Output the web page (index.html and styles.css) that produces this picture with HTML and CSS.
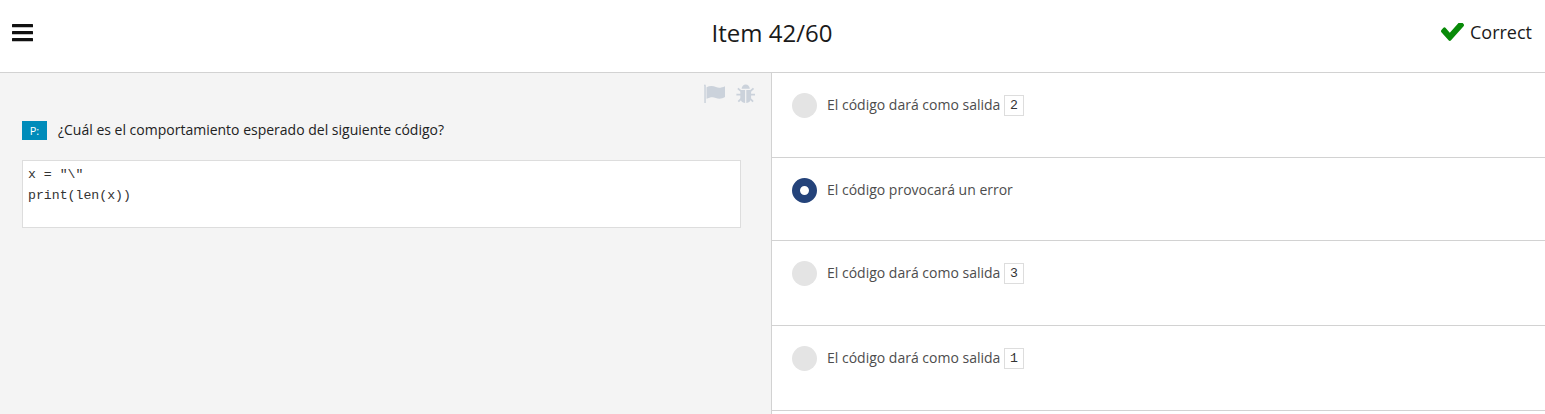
FILE: index.html
```
<!DOCTYPE html>
<html lang="es">
<head>
<meta charset="utf-8">
<title>Item 42/60</title>
<link rel="stylesheet" href="styles.css">
</head>
<body>
<header class="header">
  <svg class="menu-icon" viewBox="0 0 21 18"><rect y="0" width="21" height="3.2" rx=".5"/><rect y="7" width="21" height="3.2" rx=".5"/><rect y="14" width="21" height="3.2" rx=".5"/></svg>
  <h1 class="title">Item 42/60</h1>
  <div class="result">
    <svg class="check-icon" viewBox="121 434 1550 1088" preserveAspectRatio="none"><path d="M1671 566q0 40-28 68l-724 724-136 136q-28 28-68 28t-68-28l-136-136-362-362q-28-28-28-68t28-68l136-136q28-28 68-28t68 28l294 295 656-657q28-28 68-28t68 28l136 136q28 28 28 68z"/></svg>
    <span>Correct</span>
  </div>
</header>
<main class="main">
  <section class="question">
    <div class="tools">
      <svg class="tool-icon flag" viewBox="0 0 22 20"><path d="M0 1.7Q0 .6.9.6t.9 1.1V19H.3V2.400Z"/><path d="M2.500 3.200C5.500 1.700 8.500 1.300 12 3c2.800 1.300 5.600.700 9-.8V13c-3.200 1.900-6.200 2.100-9.200.9-3.200-1.400-6-.7-9.300.8Z"/></svg>
      <svg class="tool-icon bug" viewBox="0 0 20 20"><path d="M5.600 4.800C5.800 2.200 7.500.5 9.700.5s3.900 1.700 4.100 4.300Z"/><path d="M4.300 6h4.800v12.900C6.200 18.800 4.300 16.600 4.300 13.400ZM10.300 6h4.800v7.400c0 3.200-1.900 5.400-4.800 5.500Z"/><path class="legs" d="M1.900 4.300 5 7.200M17.500 4.300 14.400 7.200M.4 10.700H5M19 10.700H14.400M2.300 17.700 5.300 14.700M17.100 17.700 14.100 14.700"/></svg>
    </div>
    <div class="prompt"><span class="badge">P:</span><span>¿Cuál es el comportamiento esperado del siguiente código?</span></div>
    <pre class="code">x = "\"
print(len(x))
</pre>
  </section>
  <section class="answers">
    <div class="answer"><span class="radio"></span><span>El código dará como salida <code class="value">2</code></span></div>
    <div class="answer short"><span class="radio selected"></span><span>El código provocará un error</span></div>
    <div class="answer"><span class="radio"></span><span>El código dará como salida <code class="value">3</code></span></div>
    <div class="answer"><span class="radio"></span><span>El código dará como salida <code class="value">1</code></span></div>
  </section>
</main>
</body>
</html>
```
FILE: styles.css
```
* { box-sizing: border-box; }
body {
  margin: 0;
  height: 414px;
  overflow: hidden;
  display: flex;
  flex-direction: column;
  background: #fff;
  color: #222;
  font: 14px/20px "Open Sans", sans-serif;
}
.header {
  height: 73px;
  flex: none;
  display: grid;
  grid-template-columns: 1fr auto 1fr;
  align-items: center;
  padding: 0 13px 7px 12px;
  border-bottom: 1px solid #d2d2d2;
}
.menu-icon { width: 21px; height: 18px; fill: #111; }
.title { margin: 0; font-size: 24px; line-height: 34px; font-weight: 400; color: #1a1a1a; }
.result { display: flex; align-items: center; justify-content: flex-end; gap: 6px; padding-bottom: 2px; font-size: 18px; line-height: 26px; color: #1a1a1a; }
.check-icon { width: 23px; height: 18px; fill: #088a08; }
.main { flex: 1; display: flex; min-height: 0; }
.question { width: 772px; flex: none; padding: 11px 30px 0 22px; background: #f4f4f4; border-right: 1px solid #d2d2d2; }
.tools { display: flex; justify-content: flex-end; gap: 10px; height: 20px; margin-right: -15px; }
.tool-icon { height: 20px; fill: #cbd2db; }
.flag { width: 22px; }
.bug { width: 20px; }
.legs { fill: none; stroke: #cbd2db; stroke-width: 1.8; }
.prompt { display: flex; align-items: center; gap: 11px; height: 20px; margin-top: 16px; }
.badge { width: 25px; height: 19px; background: #008cba; color: #fff; font-size: 11px; line-height: 20px; text-align: center; }
.code { margin: 20px 0 0; width: 719px; height: 68px; padding: 3px 5px; background: #fff; border: 1px solid #ddd; font: 13.2px/21px "Courier New", "Liberation Mono", monospace; color: #333; }
.answers { flex: 1; }
.answer { display: flex; height: 85px; padding: 20px 20px 0; gap: 10px; line-height: 23px; border-bottom: 1px solid #d2d2d2; color: #4d4d4d; }
.short { height: 83px; }
.radio { width: 25px; height: 25px; flex: none; border-radius: 50%; background: #e4e4e4; }
.selected { background: #fff; border: 8.500px solid #24437a; }
.value { display: inline-block; width: 20px; height: 21px; border: 1px solid #ddd; font: 13.2px/19px "Courier New", "Liberation Mono", monospace; text-align: center; vertical-align: 1px; color: #333; }
```
